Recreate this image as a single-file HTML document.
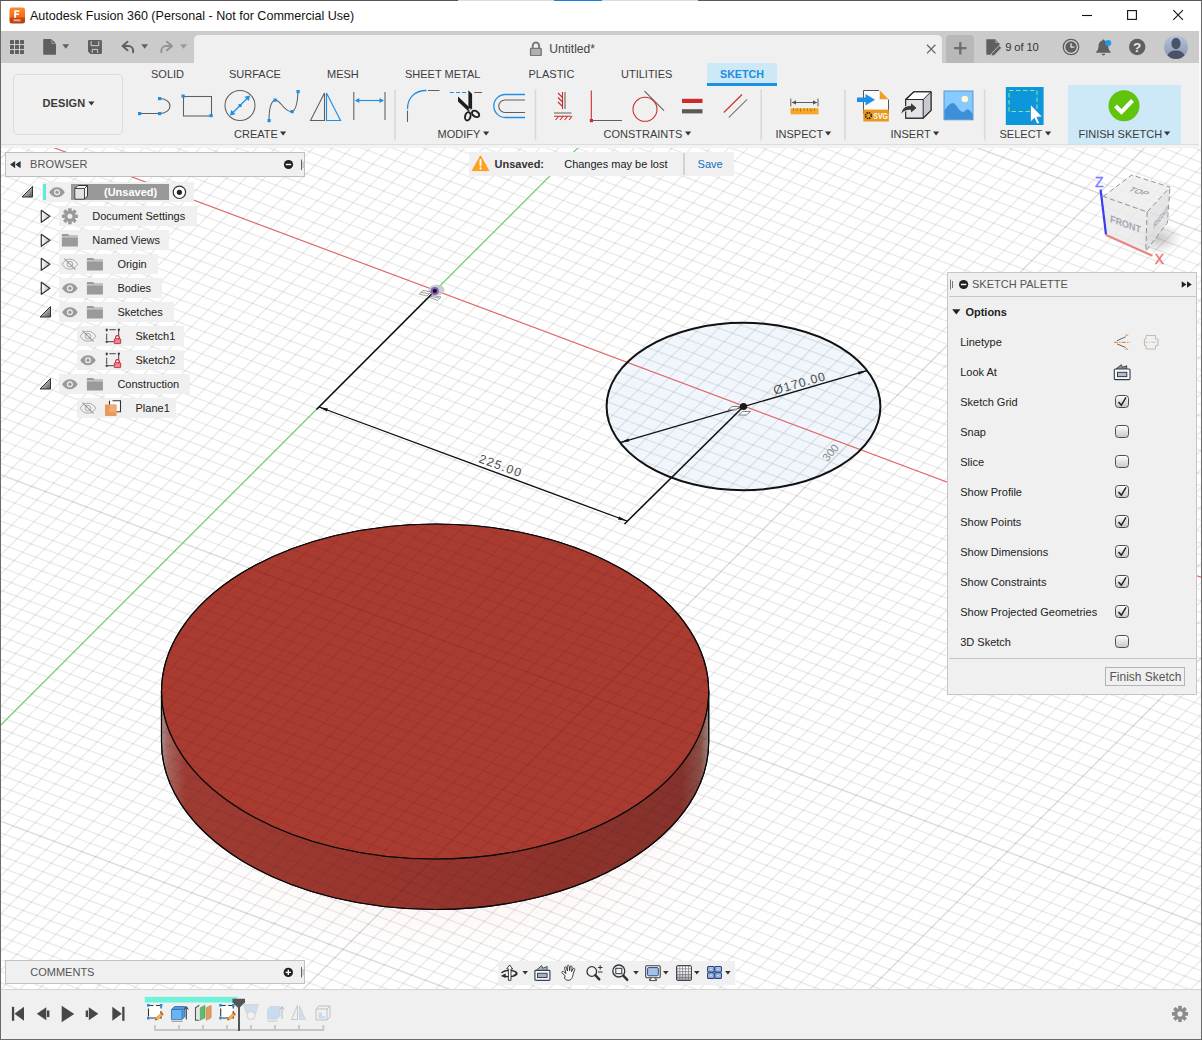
<!DOCTYPE html>
<html><head><meta charset="utf-8"><title>Autodesk Fusion 360</title>
<style>
*{box-sizing:border-box;margin:0;padding:0}
html,body{width:1202px;height:1040px;overflow:hidden;background:#fff}
body{font-family:"Liberation Sans",sans-serif;font-size:12px;color:#333;position:relative}
.abs{position:absolute}
svg{position:absolute;overflow:visible}
.t{position:absolute;white-space:nowrap;line-height:1}
</style></head><body>
<!-- ===== VIEWPORT ===== -->
<svg class="abs" style="left:0;top:0" width="1202" height="1040" viewBox="0 0 1202 1040">
<defs>
<clipPath id="vp"><rect x="0" y="146" width="1202" height="844"/></clipPath>
<linearGradient id="side" x1="161" y1="0" x2="709" y2="0" gradientUnits="userSpaceOnUse">
<stop offset="0" stop-color="#a89088"/><stop offset="0.012" stop-color="#a4665e"/><stop offset="0.045" stop-color="#9e3c34"/>
<stop offset="0.4" stop-color="#98362e"/><stop offset="0.75" stop-color="#8c322b"/><stop offset="0.95" stop-color="#86322c"/><stop offset="0.985" stop-color="#8a5048"/><stop offset="1" stop-color="#9c8880"/>
</linearGradient>
<radialGradient id="shadow" cx="0.5" cy="0.5" r="0.5"><stop offset="0" stop-color="#f4d8d4" stop-opacity="0.4"/><stop offset="0.6" stop-color="#f8e4e0" stop-opacity="0.22"/><stop offset="1" stop-color="#fff" stop-opacity="0"/></radialGradient>
</defs>
<g clip-path="url(#vp)">
<rect x="0" y="146" width="1202" height="844" fill="#fff"/>
<!-- ground shadow -->
<ellipse cx="450" cy="820" rx="330" ry="170" fill="url(#shadow)"/>
<!-- disk -->
<path d="M161.5 691.5 L161.5 742 A273.6 167.5 0 0 0 708.7 742 L708.7 691.5 Z" fill="url(#side)" stroke="#0a0a0a" stroke-width="1.15"/>
<ellipse cx="435.1" cy="691.5" rx="273.6" ry="167.5" fill="#aa3b31" stroke="#0a0a0a" stroke-width="1.15"/>
<!-- sketch circle fill -->
<ellipse cx="743.5" cy="406.5" rx="136.9" ry="83.7" fill="#edf5fc" fill-opacity="0.85"/>
<!-- grid -->
<path d="M-1406.0 998.6L1204.6 1976.4M-1389.2 981.8L1221.4 1959.6M-1380.8 973.4L1229.8 1951.2M-1372.4 965.0L1238.2 1942.8M-1364.0 956.6L1246.6 1934.4M-1355.6 948.2L1255.0 1926.0M-1347.2 939.8L1263.4 1917.6M-1338.8 931.4L1271.8 1909.2M-1330.4 923.0L1280.2 1900.8M-1322.0 914.6L1288.6 1892.4M-1313.6 906.2L1297.0 1884.0M-1305.2 897.8L1305.4 1875.6M-1296.8 889.4L1313.8 1867.2M-1288.4 881.0L1322.2 1858.8M-1280.0 872.6L1330.6 1850.4M-1271.6 864.2L1339.0 1842.0M-1263.2 855.8L1347.4 1833.6M-1254.8 847.4L1355.8 1825.2M-1246.4 839.0L1364.2 1816.8M-1238.0 830.6L1372.6 1808.4M-1229.6 822.2L1381.0 1800.0M-1221.2 813.8L1389.4 1791.6M-1212.8 805.4L1397.8 1783.2M-1204.4 797.0L1406.2 1774.8M-1196.0 788.6L1414.6 1766.4M-1187.6 780.2L1423.0 1758.0M-1179.2 771.8L1431.4 1749.6M-1170.8 763.4L1439.8 1741.2M-1162.4 755.0L1448.2 1732.8M-1154.0 746.6L1456.6 1724.4M-1137.2 729.8L1473.4 1707.6M-1128.8 721.4L1481.8 1699.2M-1120.4 713.0L1490.2 1690.8M-1112.0 704.6L1498.6 1682.4M-1103.6 696.2L1507.0 1674.0M-1095.2 687.8L1515.4 1665.6M-1086.8 679.4L1523.8 1657.2M-1078.4 671.0L1532.2 1648.8M-1070.0 662.6L1540.6 1640.4M-1061.6 654.2L1549.0 1632.0M-1053.2 645.8L1557.4 1623.6M-1044.8 637.4L1565.8 1615.2M-1036.4 629.0L1574.2 1606.8M-1028.0 620.6L1582.6 1598.4M-1019.6 612.2L1591.0 1590.0M-1011.2 603.8L1599.4 1581.6M-1002.8 595.4L1607.8 1573.2M-994.4 587.0L1616.2 1564.8M-986.0 578.6L1624.6 1556.4M-977.6 570.2L1633.0 1548.0M-969.2 561.8L1641.4 1539.6M-960.8 553.4L1649.8 1531.2M-952.4 545.0L1658.2 1522.8M-944.0 536.6L1666.6 1514.4M-935.6 528.2L1675.0 1506.0M-927.2 519.8L1683.4 1497.6M-918.8 511.4L1691.8 1489.2M-910.4 503.0L1700.2 1480.8M-902.0 494.6L1708.6 1472.4M-885.2 477.8L1725.4 1455.6M-876.8 469.4L1733.8 1447.2M-868.4 461.0L1742.2 1438.8M-860.0 452.6L1750.6 1430.4M-851.6 444.2L1759.0 1422.0M-843.2 435.8L1767.4 1413.6M-834.8 427.4L1775.8 1405.2M-826.4 419.0L1784.2 1396.8M-818.0 410.6L1792.6 1388.4M-809.6 402.2L1801.0 1380.0M-801.2 393.8L1809.4 1371.6M-792.8 385.4L1817.8 1363.2M-784.4 377.0L1826.2 1354.8M-776.0 368.6L1834.6 1346.4M-767.6 360.2L1843.0 1338.0M-759.2 351.8L1851.4 1329.6M-750.8 343.4L1859.8 1321.2M-742.4 335.0L1868.2 1312.8M-734.0 326.6L1876.6 1304.4M-725.6 318.2L1885.0 1296.0M-717.2 309.8L1893.4 1287.6M-708.8 301.4L1901.8 1279.2M-700.4 293.0L1910.2 1270.8M-692.0 284.6L1918.6 1262.4M-683.6 276.2L1927.0 1254.0M-675.2 267.8L1935.4 1245.6M-666.8 259.4L1943.8 1237.2M-658.4 251.0L1952.2 1228.8M-650.0 242.6L1960.6 1220.4M-633.2 225.8L1977.4 1203.6M-624.8 217.4L1985.8 1195.2M-616.4 209.0L1994.2 1186.8M-608.0 200.6L2002.6 1178.4M-599.6 192.2L2011.0 1170.0M-591.2 183.8L2019.4 1161.6M-582.8 175.4L2027.8 1153.2M-574.4 167.0L2036.2 1144.8M-566.0 158.6L2044.6 1136.4M-557.6 150.2L2053.0 1128.0M-549.2 141.8L2061.4 1119.6M-540.8 133.4L2069.8 1111.2M-532.4 125.0L2078.2 1102.8M-524.0 116.6L2086.6 1094.4M-515.6 108.2L2095.0 1086.0M-507.2 99.8L2103.4 1077.6M-498.8 91.4L2111.8 1069.2M-490.4 83.0L2120.2 1060.8M-482.0 74.6L2128.6 1052.4M-473.6 66.2L2137.0 1044.0M-465.2 57.8L2145.4 1035.6M-456.8 49.4L2153.8 1027.2M-448.4 41.0L2162.2 1018.8M-440.0 32.6L2170.6 1010.4M-431.6 24.2L2179.0 1002.0M-423.2 15.8L2187.4 993.6M-414.8 7.4L2195.8 985.2M-406.4 -1.0L2204.2 976.8M-398.0 -9.4L2212.6 968.4M-381.2 -26.2L2229.4 951.6M-372.8 -34.6L2237.8 943.2M-364.4 -43.0L2246.2 934.8M-356.0 -51.4L2254.6 926.4M-347.6 -59.8L2263.0 918.0M-339.2 -68.2L2271.4 909.6M-330.8 -76.6L2279.8 901.2M-322.4 -85.0L2288.2 892.8M-314.0 -93.4L2296.6 884.4M-305.6 -101.8L2305.0 876.0M-297.2 -110.2L2313.4 867.6M-288.8 -118.6L2321.8 859.2M-280.4 -127.0L2330.2 850.8M-272.0 -135.4L2338.6 842.4M-263.6 -143.8L2347.0 834.0M-255.2 -152.2L2355.4 825.6M-246.8 -160.6L2363.8 817.2M-238.4 -169.0L2372.2 808.8M-230.0 -177.4L2380.6 800.4M-221.6 -185.8L2389.0 792.0M-213.2 -194.2L2397.4 783.6M-204.8 -202.6L2405.8 775.2M-196.4 -211.0L2414.2 766.8M-188.0 -219.4L2422.6 758.4M-179.6 -227.8L2431.0 750.0M-171.2 -236.2L2439.4 741.6M-162.8 -244.6L2447.8 733.2M-154.4 -253.0L2456.2 724.8M-146.0 -261.4L2464.6 716.4M-129.2 -278.2L2481.4 699.6M-120.8 -286.6L2489.8 691.2M-112.4 -295.0L2498.2 682.8M-104.0 -303.4L2506.6 674.4M-95.6 -311.8L2515.0 666.0M-87.2 -320.2L2523.4 657.6M-78.8 -328.6L2531.8 649.2M-70.4 -337.0L2540.2 640.8M-62.0 -345.4L2548.6 632.4M-53.6 -353.8L2557.0 624.0M-45.2 -362.2L2565.4 615.6M-36.8 -370.6L2573.8 607.2M-28.4 -379.0L2582.2 598.8M-20.0 -387.4L2590.6 590.4M-11.6 -395.8L2599.0 582.0M-3.2 -404.2L2607.4 573.6M5.2 -412.6L2615.8 565.2M13.6 -421.0L2624.2 556.8M22.0 -429.4L2632.6 548.4M30.4 -437.8L2641.0 540.0M38.8 -446.2L2649.4 531.6M47.2 -454.6L2657.8 523.2M55.6 -463.0L2666.2 514.8M64.0 -471.4L2674.6 506.4M72.4 -479.8L2683.0 498.0M80.8 -488.2L2691.4 489.6M89.2 -496.6L2699.8 481.2M97.6 -505.0L2708.2 472.8M106.0 -513.4L2716.6 464.4M122.8 -530.2L2733.4 447.6M131.2 -538.6L2741.8 439.2M139.6 -547.0L2750.2 430.8M148.0 -555.4L2758.6 422.4M156.4 -563.8L2767.0 414.0M164.8 -572.2L2775.4 405.6M173.2 -580.6L2783.8 397.2M181.6 -589.0L2792.2 388.8M190.0 -597.4L2800.6 380.4M198.4 -605.8L2809.0 372.0M206.8 -614.2L2817.4 363.6M215.2 -622.6L2825.8 355.2M223.6 -631.0L2834.2 346.8M232.0 -639.4L2842.6 338.4M240.4 -647.8L2851.0 330.0M248.8 -656.2L2859.4 321.6M257.2 -664.6L2867.8 313.2M265.6 -673.0L2876.2 304.8M274.0 -681.4L2884.6 296.4" stroke="#000" stroke-opacity="0.082" stroke-width="1.35" fill="none"/>
<path d="M-2010.0 1338.2L6.0 -677.8M-1996.2 1343.3L19.8 -672.7M-1982.5 1348.5L33.5 -667.5M-1968.7 1353.6L47.3 -662.4M-1955.0 1358.8L61.0 -657.2M-1941.3 1363.9L74.7 -652.1M-1927.5 1369.1L88.5 -646.9M-1913.8 1374.2L102.2 -641.8M-1900.0 1379.4L116.0 -636.6M-1886.3 1384.5L129.7 -631.5M-1872.6 1389.7L143.4 -626.3M-1858.8 1394.8L157.2 -621.2M-1845.1 1399.9L170.9 -616.1M-1831.3 1405.1L184.7 -610.9M-1803.9 1415.4L212.1 -600.6M-1790.1 1420.5L225.9 -595.5M-1776.4 1425.7L239.6 -590.3M-1762.6 1430.8L253.4 -585.2M-1748.9 1436.0L267.1 -580.0M-1735.2 1441.1L280.8 -574.9M-1721.4 1446.3L294.6 -569.7M-1707.7 1451.4L308.3 -564.6M-1693.9 1456.6L322.1 -559.4M-1680.2 1461.7L335.8 -554.3M-1666.5 1466.8L349.5 -549.2M-1652.7 1472.0L363.3 -544.0M-1639.0 1477.1L377.0 -538.9M-1625.2 1482.3L390.8 -533.7M-1611.5 1487.4L404.5 -528.6M-1597.8 1492.6L418.2 -523.4M-1584.0 1497.7L432.0 -518.3M-1570.3 1502.9L445.7 -513.1M-1556.5 1508.0L459.5 -508.0M-1542.8 1513.2L473.2 -502.8M-1529.1 1518.3L486.9 -497.7M-1515.3 1523.5L500.7 -492.5M-1501.6 1528.6L514.4 -487.4M-1487.8 1533.7L528.2 -482.3M-1474.1 1538.9L541.9 -477.1M-1460.4 1544.0L555.6 -472.0M-1446.6 1549.2L569.4 -466.8M-1432.9 1554.3L583.1 -461.7M-1419.1 1559.5L596.9 -456.5M-1391.7 1569.8L624.3 -446.2M-1377.9 1574.9L638.1 -441.1M-1364.2 1580.1L651.8 -435.9M-1350.4 1585.2L665.6 -430.8M-1336.7 1590.3L679.3 -425.6M-1323.0 1595.5L693.0 -420.5M-1309.2 1600.6L706.8 -415.4M-1295.5 1605.8L720.5 -410.2M-1281.7 1610.9L734.3 -405.1M-1268.0 1616.1L748.0 -399.9M-1254.3 1621.2L761.7 -394.8M-1240.5 1626.4L775.5 -389.6M-1226.8 1631.5L789.2 -384.5M-1213.0 1636.7L803.0 -379.3M-1199.3 1641.8L816.7 -374.2M-1185.6 1647.0L830.4 -369.0M-1171.8 1652.1L844.2 -363.9M-1158.1 1657.2L857.9 -358.8M-1144.3 1662.4L871.7 -353.6M-1130.6 1667.5L885.4 -348.5M-1116.9 1672.7L899.1 -343.3M-1103.1 1677.8L912.9 -338.2M-1089.4 1683.0L926.6 -333.0M-1075.6 1688.1L940.4 -327.9M-1061.9 1693.3L954.1 -322.7M-1048.2 1698.4L967.8 -317.6M-1034.4 1703.6L981.6 -312.4M-1020.7 1708.7L995.3 -307.3M-1006.9 1713.9L1009.1 -302.1M-979.5 1724.1L1036.5 -291.9M-965.7 1729.3L1050.3 -286.7M-952.0 1734.4L1064.0 -281.6M-938.2 1739.6L1077.8 -276.4M-924.5 1744.7L1091.5 -271.3M-910.8 1749.9L1105.2 -266.1M-897.0 1755.0L1119.0 -261.0M-883.3 1760.2L1132.7 -255.8M-869.5 1765.3L1146.5 -250.7M-855.8 1770.5L1160.2 -245.5M-842.1 1775.6L1173.9 -240.4M-828.3 1780.8L1187.7 -235.2M-814.6 1785.9L1201.4 -230.1M-800.8 1791.0L1215.2 -225.0M-787.1 1796.2L1228.9 -219.8M-773.4 1801.3L1242.6 -214.7M-759.6 1806.5L1256.4 -209.5M-745.9 1811.6L1270.1 -204.4M-732.1 1816.8L1283.9 -199.2M-718.4 1821.9L1297.6 -194.1M-704.7 1827.1L1311.3 -188.9M-690.9 1832.2L1325.1 -183.8M-677.2 1837.4L1338.8 -178.6M-663.4 1842.5L1352.6 -173.5M-649.7 1847.7L1366.3 -168.4M-636.0 1852.8L1380.0 -163.2M-622.2 1857.9L1393.8 -158.1M-608.5 1863.1L1407.5 -152.9M-594.7 1868.2L1421.3 -147.8M-567.3 1878.5L1448.7 -137.5M-553.5 1883.7L1462.5 -132.3M-539.8 1888.8L1476.2 -127.2M-526.0 1894.0L1490.0 -122.0M-512.3 1899.1L1503.7 -116.9M-498.6 1904.3L1517.4 -111.7M-484.8 1909.4L1531.2 -106.6M-471.1 1914.5L1544.9 -101.5M-457.3 1919.7L1558.7 -96.3M-443.6 1924.8L1572.4 -91.2M-429.9 1930.0L1586.1 -86.0M-416.1 1935.1L1599.9 -80.9M-402.4 1940.3L1613.6 -75.7M-388.6 1945.4L1627.4 -70.6M-374.9 1950.6L1641.1 -65.4M-361.2 1955.7L1654.8 -60.3M-347.4 1960.9L1668.6 -55.1M-333.7 1966.0L1682.3 -50.0M-319.9 1971.2L1696.1 -44.8M-306.2 1976.3L1709.8 -39.7M-292.5 1981.4L1723.5 -34.6M-278.7 1986.6L1737.3 -29.4M-265.0 1991.7L1751.0 -24.3M-251.2 1996.9L1764.8 -19.1M-237.5 2002.0L1778.5 -14.0M-223.8 2007.2L1792.2 -8.8M-210.0 2012.3L1806.0 -3.7M-196.3 2017.5L1819.7 1.5M-182.5 2022.6L1833.5 6.6M-155.1 2032.9L1860.9 16.9M-141.3 2038.1L1874.7 22.1M-127.6 2043.2L1888.4 27.2M-113.8 2048.3L1902.2 32.3M-100.1 2053.5L1915.9 37.5M-86.4 2058.6L1929.6 42.6M-72.6 2063.8L1943.4 47.8M-58.9 2068.9L1957.1 52.9M-45.1 2074.1L1970.9 58.1M-31.4 2079.2L1984.6 63.2M-17.7 2084.4L1998.3 68.4M-3.9 2089.5L2012.1 73.5M9.8 2094.7L2025.8 78.7M23.6 2099.8L2039.6 83.8M37.3 2104.9L2053.3 88.9M51.0 2110.1L2067.0 94.1M64.8 2115.2L2080.8 99.2M78.5 2120.4L2094.5 104.4M92.3 2125.5L2108.3 109.5M106.0 2130.7L2122.0 114.7M119.7 2135.8L2135.7 119.8M133.5 2141.0L2149.5 125.0M147.2 2146.1L2163.2 130.1M161.0 2151.3L2177.0 135.3M174.7 2156.4L2190.7 140.4M188.4 2161.6L2204.4 145.6M202.2 2166.7L2218.2 150.7M215.9 2171.8L2231.9 155.8M229.7 2177.0L2245.7 161.0M257.1 2187.3L2273.1 171.3M270.9 2192.4L2286.9 176.4M284.6 2197.6L2300.6 181.6M298.4 2202.7L2314.4 186.7M312.1 2207.9L2328.1 191.9M325.8 2213.0L2341.8 197.0M339.6 2218.2L2355.6 202.2M353.3 2223.3L2369.3 207.3M367.1 2228.5L2383.1 212.5M380.8 2233.6L2396.8 217.6M394.5 2238.7L2410.5 222.7M408.3 2243.9L2424.3 227.9M422.0 2249.0L2438.0 233.0M435.8 2254.2L2451.8 238.2M449.5 2259.3L2465.5 243.3M463.2 2264.5L2479.2 248.5M477.0 2269.6L2493.0 253.6M490.7 2274.8L2506.7 258.8M504.5 2279.9L2520.5 263.9M518.2 2285.1L2534.2 269.1M531.9 2290.2L2547.9 274.2M545.7 2295.4L2561.7 279.4M559.4 2300.5L2575.4 284.5M573.2 2305.6L2589.2 289.6M586.9 2310.8L2602.9 294.8M600.6 2315.9L2616.6 299.9M614.4 2321.1L2630.4 305.1M628.1 2326.2L2644.1 310.2M641.9 2331.4L2657.9 315.4M669.3 2341.7L2685.3 325.7M683.1 2346.8L2699.1 330.8M696.8 2352.0L2712.8 336.0M710.6 2357.1L2726.6 341.1M724.3 2362.2L2740.3 346.2M738.0 2367.4L2754.0 351.4M751.8 2372.5L2767.8 356.5M765.5 2377.7L2781.5 361.7M779.3 2382.8L2795.3 366.8M793.0 2388.0L2809.0 372.0M806.7 2393.1L2822.7 377.1M820.5 2398.3L2836.5 382.3M834.2 2403.4L2850.2 387.4M848.0 2408.6L2864.0 392.6M861.7 2413.7L2877.7 397.7M875.4 2418.9L2891.4 402.9M889.2 2424.0L2905.2 408.0M902.9 2429.1L2918.9 413.1M916.7 2434.3L2932.7 418.3M930.4 2439.4L2946.4 423.4M944.1 2444.6L2960.1 428.6M957.9 2449.7L2973.9 433.7M971.6 2454.9L2987.6 438.9M985.4 2460.0L3001.4 444.0M999.1 2465.2L3015.1 449.2M1012.8 2470.3L3028.8 454.3M1026.6 2475.5L3042.6 459.5M1040.3 2480.6L3056.3 464.6M1054.1 2485.8L3070.1 469.8M1081.5 2496.0L3097.5 480.0M1095.3 2501.2L3111.3 485.2M1109.0 2506.3L3125.0 490.3M1122.8 2511.5L3138.8 495.5M1136.5 2516.6L3152.5 500.6M1150.2 2521.8L3166.2 505.8M1164.0 2526.9L3180.0 510.9M1177.7 2532.1L3193.7 516.1M1191.5 2537.2L3207.5 521.2" stroke="#000" stroke-opacity="0.082" stroke-width="1.35" fill="none"/>
<path d="M-1397.6 990.2L1213.0 1968.0M-1145.6 738.2L1465.0 1716.0M-893.6 486.2L1717.0 1464.0M-641.6 234.2L1969.0 1212.0M-137.6 -269.8L2473.0 708.0M114.4 -521.8L2725.0 456.0" stroke="#000" stroke-opacity="0.14" stroke-width="1.4" fill="none"/>
<path d="M-1817.6 1410.2L198.4 -605.8M-1405.4 1564.6L610.6 -451.4M-581.0 1873.4L1435.0 -142.6M-168.8 2027.8L1847.2 11.8M243.4 2182.1L2259.4 166.1M655.6 2336.5L2671.6 320.5M1067.8 2490.9L3083.8 474.9" stroke="#000" stroke-opacity="0.14" stroke-width="1.4" fill="none"/>
<!-- fade grid over the body -->
<path d="M161.5 691.5 L161.5 742 A273.6 167.5 0 0 0 708.7 742 L708.7 691.5 A273.6 167.5 0 0 1 161.5 691.5 Z" fill="url(#side)" fill-opacity="0.3"/>
<ellipse cx="435.1" cy="691.5" rx="273.6" ry="167.5" fill="#aa3b31" fill-opacity="0.3" stroke="#0a0a0a" stroke-width="1.15"/>
<path d="M161.5 691.5 L161.5 742 A273.6 167.5 0 0 0 708.7 742 L708.7 691.5" fill="none" stroke="#0a0a0a" stroke-width="1.15"/>
<!-- axes -->
<line x1="0" y1="127.5" x2="1202" y2="577.6" stroke="#df6565" stroke-width="1.15"/>
<line x1="-10" y1="735.8" x2="600" y2="125.8" stroke="#5fd35f" stroke-width="1.2"/>
<!-- sketch circle outline -->
<ellipse cx="743.5" cy="406.5" rx="136.9" ry="83.7" fill="none" stroke="#111" stroke-width="2"/>
<!-- dimension 225 -->
<g stroke="#111" stroke-width="1.3" fill="none">
<line x1="434.8" y1="291" x2="316.5" y2="409.5" stroke-width="1.6"/>
<line x1="743.5" y1="406.5" x2="624.5" y2="524" stroke-width="1.6"/>
<line x1="319" y1="407" x2="627" y2="521"/>
</g>
<path d="M319 407L326.900 411.600L328 408.600zM627 521L618 519.400L619.100 516.400z" fill="#111"/>
<!-- diameter dim -->
<line x1="620.2" y1="442.6" x2="866.8" y2="370.7" stroke="#111" stroke-width="1.25"/>
<path d="M620.200 442.600L629.300 441.600L628.400 438.600zM866.800 370.700L858.600 374.700L857.700 371.700z" fill="#111"/>
<text transform="translate(800.8 387.2) rotate(-16)" font-family="Liberation Sans, sans-serif" font-size="12.3" letter-spacing="1" text-anchor="middle" fill="#333" opacity=".87">Ø170.00</text>
<text transform="translate(499.3 469.8) rotate(20.3)" font-family="Liberation Sans, sans-serif" font-size="12.3" letter-spacing="1.3" text-anchor="middle" fill="#333" opacity=".87">225.00</text>
<text transform="translate(833.5 455) rotate(-50)" font-family="Liberation Sans, sans-serif" font-size="11" text-anchor="middle" fill="#888">300</text>
<!-- origin marker -->
<ellipse cx="436.5" cy="290" rx="8" ry="5.600" fill="#c6c6c6" fill-opacity="0.85"/>
<g stroke="#777" stroke-width="0.700" fill="#fff" fill-opacity="0.85">
<path d="M419.200 294l3.800-3.500l8 1.500l-4 4zM429.500 297.500l3.500-2l8 1.500l-3.500 3.500z"/>
<path d="M421 292.300l8 1.600M431.200 296.500l8 1.600" fill="none"/>
</g>
<circle cx="434.800" cy="291" r="3.100" fill="#1a1a1a" stroke="#8b5fc7" stroke-width="1.900"/>
<!-- centre marker -->
<g stroke="#666" stroke-width="0.8" fill="#fff" fill-opacity="0.7">
<path d="M728 410l4-3.5h8l-4 3.5zM738.5 415l4-3.5h8l-4 3.5z"/>
</g>
<circle cx="743.5" cy="406.5" r="3.6" fill="#1a1a1a"/>
</g>
</svg>
<!-- ===== TITLE BAR ===== -->
<div class="abs" style="left:0;top:0;width:1202px;height:31px;background:#fff"></div>
<svg style="left:9px;top:7px" width="17" height="17" viewBox="0 0 17 17">
<defs><linearGradient id="fl" x1="0" y1="0" x2="0" y2="1"><stop offset="0" stop-color="#ff8a2a"/><stop offset="0.62" stop-color="#f26a16"/><stop offset="0.63" stop-color="#c9480e"/><stop offset="1" stop-color="#b8400c"/></linearGradient></defs>
<rect x="0.5" y="0.5" width="15.5" height="16" rx="2.5" fill="url(#fl)"/>
<path d="M5.2 3.2h5.2v1.7H7.1v1.6h2.9v1.6H7.1v2.6H5.2z" fill="#fff"/>
<rect x="4.5" y="12.3" width="7" height="2" fill="#fff" fill-opacity="0.55"/>
</svg>
<div class="t" style="left:30px;top:9.500px;font-size:12.55px;color:#111">Autodesk Fusion 360 (Personal - Not for Commercial Use)</div>
<svg style="left:1078px;top:5px" width="112" height="22" viewBox="0 0 112 22">
<path d="M4 10.5h10" stroke="#111" stroke-width="1.1"/>
<rect x="49.6" y="5.6" width="8.8" height="8.8" fill="none" stroke="#111" stroke-width="1.1"/>
<path d="M95.300 5.200l9.600 9.700M104.900 5.200l-9.600 9.700" stroke="#111" stroke-width="1.1"/>
</svg>
<!-- ===== TAB BAR ===== -->
<div class="abs" style="left:0;top:31px;width:1199px;height:32px;background:#cbcbcb"></div>
<div class="abs" style="left:194px;top:35px;width:748px;height:29px;background:#f0f0f0;border-radius:5px 5px 0 0"></div>
<div class="abs" style="left:946px;top:35px;width:27.5px;height:27.5px;background:#b8b8b8;border-radius:4px 4px 0 0"></div>
<svg style="left:0;top:31px" width="1202" height="32" viewBox="0 31 1202 32">
<g fill="#5f5f5f">
<!-- grid icon -->
<g>
<rect x="10" y="40" width="4" height="4" rx=".6"/><rect x="15" y="40" width="4" height="4" rx=".6"/><rect x="20" y="40" width="4" height="4" rx=".6"/>
<rect x="10" y="45" width="4" height="4" rx=".6"/><rect x="15" y="45" width="4" height="4" rx=".6"/><rect x="20" y="45" width="4" height="4" rx=".6"/>
<rect x="10" y="50" width="4" height="4" rx=".6"/><rect x="15" y="50" width="4" height="4" rx=".6"/><rect x="20" y="50" width="4" height="4" rx=".6"/>
</g>
<!-- file icon -->
<path d="M44 39h7.2l4.8 4.8V54a.8.8 0 0 1-.8.8H44a.8.8 0 0 1-.8-.8V39.8a.8.8 0 0 1 .8-.8z"/>
<path d="M51.6 39l4.4 4.4h-4.4z" fill="#cbcbcb"/>
<path d="M52.2 39.8v3.1h3.1z" fill="#5f5f5f"/>
<path d="M62.4 44.3h6.8l-3.4 4.4z"/>
<!-- save icon -->
<path d="M89.200 39.900h11.500a1.200 1.200 0 0 1 1.200 1.200v11.700a1.200 1.200 0 0 1-1.200 1.200h-10.200l-2.500-2.500v-10.400a1.200 1.200 0 0 1 1.200-1.200z"/>
<path d="M91.100 41.100v4.600h7.700v-4.600" fill="none" stroke="#d0d0d0" stroke-width="1"/>
<path d="M92.300 52.900v-3.500h5.300v3.500" fill="none" stroke="#d0d0d0" stroke-width="1"/>
<!-- undo -->
<path d="M141.300 44.300h6.800l-3.400 4.400z"/>
<path d="M180.200 44.300h6.800l-3.400 4.400z" fill="#9a9a9a"/>
</g>
<path d="M127.500 41.700l-5 4.300l5 4.300M122.800 46h5.700a4.600 4.600 0 0 1 4.600 4.600v1.600" fill="none" stroke="#5f5f5f" stroke-width="1.9" stroke-linecap="round" stroke-linejoin="round"/>
<path d="M167 41.700l5 4.300l-5 4.300M171.700 46h-5.700a4.600 4.600 0 0 0-4.600 4.600v1.600" fill="none" stroke="#929292" stroke-width="1.9" stroke-linecap="round" stroke-linejoin="round"/>
<!-- lock icon -->
<g>
<path d="M532.700 48v-2.300a3.200 3.200 0 0 1 6.400 0v2.300" fill="none" stroke="#777" stroke-width="1.900"/>
<rect x="529.900" y="47.700" width="12" height="8.200" rx="1" fill="#777"/>
<path d="M531.300 50h9.200M531.300 52h9.200M531.300 54h9.200" stroke="#eaeaea" stroke-width="1"/>
</g>
<!-- tab close -->
<path d="M927 44.800l8.400 8.600M935.400 44.800l-8.400 8.600" stroke="#666" stroke-width="1.3"/>
<!-- plus -->
<path d="M960.300 42v12.400M954.100 48.200h12.400" stroke="#6e6e6e" stroke-width="2.3"/>
<!-- job status icon -->
<path d="M986.300 39.200h9l4 4v5l-5.500 6.500h-7.500z" fill="#5f5f5f"/>
<path d="M995.600 39.200l3.700 3.700h-3.700z" fill="#cbcbcb"/><path d="M996.200 40.600v2h2z" fill="#5f5f5f"/>
<path d="M991.800 53.200l7.400-7.600l2.400 2.300l-7.400 7.600l-3.200 .800z" fill="#5f5f5f" stroke="#cbcbcb" stroke-width="0.900"/>
<!-- clock -->
<circle cx="1071" cy="47" r="7.700" fill="#d4d4d4" stroke="#5f5f5f" stroke-width="1.300"/>
<circle cx="1071" cy="47" r="5.700" fill="#5f5f5f"/>
<path d="M1071 43.200v4h3.400" fill="none" stroke="#e4e4e4" stroke-width="1.300"/>
<!-- bell -->
<path d="M1103.400 39.500a1.300 1.300 0 0 1 1.300 1.300c2.600 .8 3.600 3 3.600 5.400c0 2.800 .8 4.200 2.400 5.800v.8h-14.600v-.8c1.600-1.600 2.400-3 2.400-5.800c0-2.400 1-4.600 3.600-5.400a1.300 1.300 0 0 1 1.300-1.300z" fill="#5f5f5f"/>
<path d="M1101.600 53.800h3.600a1.800 1.800 0 0 1-3.600 0z" fill="#5f5f5f"/>
<circle cx="1108.200" cy="43" r="3.100" fill="#1e9be9"/>
<!-- help -->
<circle cx="1137.200" cy="47" r="8.200" fill="#5f5f5f"/>
<text x="1137.200" y="52" font-family="Liberation Sans, sans-serif" font-weight="bold" font-size="13.500" fill="#e8e8e8" text-anchor="middle">?</text>
<!-- avatar -->
<defs><linearGradient id="av" x1="0" y1="0" x2="0" y2="1"><stop offset="0" stop-color="#b8c4dc"/><stop offset="1" stop-color="#8894b0"/></linearGradient><clipPath id="avc"><circle cx="1176" cy="47" r="12"/></clipPath></defs>
<circle cx="1176" cy="47" r="12" fill="url(#av)"/>
<g clip-path="url(#avc)" fill="#4a5468"><ellipse cx="1176" cy="43.500" rx="4.600" ry="5.800"/><path d="M1166.500 60c0-6 3.500-8.500 7-9.500h5c3.500 1 7 3.500 7 9.500z"/></g>
</svg>
<div class="t" style="left:549.300px;top:43px;font-size:12.100px;color:#444">Untitled*</div>
<div class="t" style="left:1005.200px;top:41.500px;font-size:11.200px;color:#333;letter-spacing:-0.1px">9 of 10</div>
<!-- ===== RIBBON ===== -->
<div class="abs" style="left:0;top:63px;width:1202px;height:82px;background:#f0f0f0"></div>
<div class="abs" style="left:0;top:144px;width:1202px;height:1px;background:#dcdcdc"></div><div class="abs" style="left:0;top:145px;width:1202px;height:3px;background:#f3f3f3"></div>
<div class="abs" style="left:707px;top:63px;width:70px;height:23px;background:#cde8f6;border-bottom:3px solid #1e90e0"></div>
<div class="abs" style="left:1068px;top:85px;width:113px;height:59px;background:#cde8f6"></div>
<div class="abs" style="left:12.500px;top:73.500px;width:110px;height:61px;border:1.500px solid #dcdcdc;border-radius:5px;background:#f1f1f1"></div>
<div class="t" style="left:42.500px;top:98px;font-size:11px;font-weight:bold;color:#3a3a3a;letter-spacing:.1px">DESIGN</div>
<style>.rt{position:absolute;top:69px;font-size:11px;color:#3c3c3c;white-space:nowrap;line-height:1}.rl{position:absolute;top:129px;font-size:11px;color:#3c3c3c;white-space:nowrap;line-height:1}</style>
<div class="rt" style="left:151px">SOLID</div>
<div class="rt" style="left:229px">SURFACE</div>
<div class="rt" style="left:327px">MESH</div>
<div class="rt" style="left:405px">SHEET METAL</div>
<div class="rt" style="left:528.500px">PLASTIC</div>
<div class="rt" style="left:621px">UTILITIES</div>
<div class="rt" style="left:720px;color:#1a8ee0;font-weight:bold;font-size:10.700px;top:69px">SKETCH</div>
<div class="rl" style="left:234px">CREATE</div>
<div class="rl" style="left:437.500px">MODIFY</div>
<div class="rl" style="left:603.500px">CONSTRAINTS</div>
<div class="rl" style="left:775.500px">INSPECT</div>
<div class="rl" style="left:890.500px">INSERT</div>
<div class="rl" style="left:999.500px">SELECT</div>
<div class="rl" style="left:1078.500px">FINISH SKETCH</div>
<svg style="left:0;top:63px" width="1202" height="83" viewBox="0 63 1202 83">
<!-- dropdown arrows -->
<g fill="#333">
<path d="M88.300 101.500h6.200l-3.100 4z"/>
<path d="M280 131.500h6.200l-3.100 4z"/><path d="M483 131.500h6.200l-3.100 4z"/><path d="M685 131.500h6.200l-3.100 4z"/>
<path d="M825 131.500h6.200l-3.100 4z"/><path d="M933 131.500h6.200l-3.100 4z"/><path d="M1045 131.500h6.200l-3.100 4z"/><path d="M1164 131.500h6.200l-3.100 4z"/>
</g>
<!-- separators -->
<g stroke="#d9d9d9" stroke-width="1.600"><path d="M395 89.500v51M535.500 89.500v51M761.200 89.500v51M845 89.500v51M984.700 89.500v51"/></g>
<g fill="none" stroke="#5e5e5e" stroke-width="1.050">
<!-- line -->
<path d="M139.500 113.500h20a10.500 7.500 0 0 0 0-15"/>
<!-- rect -->
<rect x="183.500" y="96.500" width="28" height="19.500"/>
<!-- circle -->
<circle cx="240" cy="105.500" r="15"/>
<!-- spline -->
<path d="M269 120.500c0-12 2-19 6-20.500c5-1.500 9 13 17 11.500c4-1 5.500-9 6-20"/>
<!-- mirror -->
<path d="M324.500 93v27.500h-14z"/>
<!-- dim -->
<path d="M353.800 92v28M385 92v28"/>
<!-- fillet -->
<path d="M428 90.500h11.500M407.500 110.500v11.500"/>
<!-- trim -->
<path d="M474.200 92.500h7.800"/>
<!-- offset -->
<path d="M525 100h-20a6.200 6.200 0 0 0 0 12.500h20"/>
<!-- fix -->
<path d="M565 92v17M554 113h17.500"/>
<!-- horiz -->
<path d="M593 120.500h29"/>
<!-- tangent -->
<path d="M644.500 91.200l19.500 19.500"/>
<!-- parallel -->
<path d="M728.800 117.500l18.200-18"/>
<!-- measure -->
<path d="M790.800 98.500v8M818 98.500v8M792 102.500h25" stroke-width="1"/>
</g>
<path d="M792 102.500l4-2.200v4.400zM817 102.500l-4-2.200v4.400z" fill="#555"/>
<g fill="none" stroke="#1e8fe6" stroke-width="1.150">
<path d="M231.500 114l17-17"/>
<path d="M326.500 93v27.500h14z"/>
<path d="M356 100.500h27"/>
<path d="M407.500 109c0-11 7-18.500 19-18.500" stroke-width="1.300"/>
<path d="M449.800 92.500h17" stroke-dasharray="4 2.200"/>
<path d="M525 94.500h-19.700a11.500 11.500 0 0 0 0 23h19.700" stroke-width="1.300"/>
</g>
<g fill="#1e8fe6">
<rect x="138" y="112" width="3.200" height="3.200"/><rect x="158" y="112" width="3.200" height="3.200"/><rect x="158" y="97" width="3.200" height="3.200"/>
<rect x="181.500" y="94.500" width="3.200" height="3.200"/><rect x="209.500" y="114" width="3.200" height="3.200"/>
<rect x="238.600" y="104" width="3" height="3"/>
<path d="M230 115.500l1.200-5.500l4.300 4.300zM250 95.500l-1.200 5.500l-4.300-4.300z"/>
<rect x="267.500" y="119" width="3.200" height="3.200"/><rect x="273.500" y="98.500" width="3.200" height="3.200"/><rect x="290.500" y="110" width="3.200" height="3.200"/><rect x="296.500" y="90" width="3.200" height="3.200"/>
<path d="M354.800 100.500l4.500-2.500v5zM384 100.500l-4.500-2.500v5z"/>
</g>
<!-- scissors -->
<g>
<path d="M458 96.600v5l10.600 10l2.800-2.400z" fill="#1e1e1e"/>
<path d="M468.400 90.300l3.700 3.700v15.200l-3.700-1.800z" fill="#1e1e1e"/>
<ellipse cx="467.800" cy="116.300" rx="2.700" ry="4.200" fill="none" stroke="#1e1e1e" stroke-width="1.900" transform="rotate(14 467.800 116.300)"/>
<ellipse cx="475.600" cy="113.900" rx="2.700" ry="4" fill="none" stroke="#1e1e1e" stroke-width="1.900" transform="rotate(-55 475.600 113.900)"/>
<circle cx="469.600" cy="109.500" r="1" fill="#eee"/>
</g>
<!-- red constraint parts -->
<g fill="none" stroke="#cc2b2b" stroke-width="1.080">
<path d="M562.500 92v17" />
<path d="M558 93l4.500 4.500M558 97.500l4.500 4.500M558 102l4.500 4.500" />
<path d="M554 116.300h17.500M558.500 116.500l-3 3.500M563 116.500l-3 3.500M567.500 116.500l-3 3.500M572 116.500l-3 3.500"/>
<path d="M591.300 90.500v29.500"/>
<circle cx="645" cy="109.300" r="12"/>
<path d="M723.800 112.500l18.200-18"/>
</g>
<rect x="589.800" y="119" width="3.200" height="3.200" fill="#cc2b2b"/>
<rect x="682" y="98.800" width="20.500" height="4.200" fill="#cc2b2b"/>
<rect x="682" y="109.200" width="20.500" height="4.200" fill="#5a5a5a"/>
<!-- ruler -->
<rect x="790.500" y="108.300" width="28" height="6" fill="#f5a623"/>
<path d="M793.500 108.300v2.500M797 108.300v2.500M800.500 108.300v3.300M804 108.300v2.500M807.500 108.300v2.500M811 108.300v3.300M814.500 108.300v2.500" stroke="#9a6200" stroke-width=".7"/>
<!-- insert svg -->
<g>
<path d="M863.500 90.500h15.500v9h9.500v15h-25z" fill="#fbfbfb"/>
<path d="M863.500 114v-23.500h15.500M888.500 99.500v14" fill="none" stroke="#555" stroke-width="1"/>
<path d="M879.800 90.500l8.700 8.700h-8.700z" fill="#f0a020"/>
<path d="M857 97.600h8.500v-3.600l9.500 5.800l-9.500 5.800v-3.600h-8.500z" fill="#1e8fe6"/>
<rect x="863.300" y="109.600" width="25.500" height="11.900" fill="#e8981c"/>
<text x="880.600" y="119.300" font-family="Liberation Sans, sans-serif" font-weight="bold" font-size="8.600" fill="#fff" text-anchor="middle" textLength="14.500" lengthAdjust="spacingAndGlyphs">SVG</text>
<circle cx="868.400" cy="115.600" r="2.900" fill="none" stroke="#1a1a1a" stroke-width="1.500" stroke-dasharray="1.400 .880"/>
</g>
<!-- insert derive -->
<g>
<path d="M905.700 99.500l8-7.700h17.300v18.600l-7.800 7.700h-17.500z" fill="#fdfdfd" stroke="#2a2a2a" stroke-width="1.100" stroke-linejoin="round"/>
<path d="M923.200 99.500l7.800-7.700v18.600l-7.800 7.700z" fill="#c9c9d1"/>
<path d="M905.700 99.500h17.500v18.600h-17.500z" fill="#e3e4e8"/>
<path d="M905.700 99.500h17.500v18.600M923.200 99.500l7.800-7.700" fill="none" stroke="#2a2a2a" stroke-width="1"/>
<path d="M905.700 99.500l8-7.700h17.300v18.600l-7.800 7.700h-17.500z" fill="none" stroke="#2a2a2a" stroke-width="1.100" stroke-linejoin="round"/>
<path d="M900.700 114.800c.8-6.200 4-9.300 9.800-9.300v-3.300l6.600 5.700l-6.600 5.700v-3.400c-4.600 0-7.400 1.200-9.800 4.600z" fill="#3a3a3c" stroke="#f4f4f4" stroke-width=".900" stroke-linejoin="round"/>
</g>
<!-- image -->
<g>
<rect x="944" y="91" width="29" height="28.800" fill="#86caff" stroke="#4a90d0" stroke-width=".900"/>
<path d="M944.500 110.500c3.200-4.800 6-7.500 8.500-7.500c3 0 6 9 10 9c2 0 3-2.700 4.600-2.700c1.800 0 3.400 2.200 5 4.700v5.300h-28.100z" fill="#3d8fd6"/>
<circle cx="964.800" cy="99" r="3.300" fill="#fffad2"/>
</g>
<!-- select -->
<g>
<rect x="1005.800" y="87" width="37.800" height="38" fill="#0c96dc"/>
<rect x="1009" y="90.500" width="28" height="21" fill="none" stroke="#8ce68c" stroke-width="1.050" stroke-dasharray="4.500 2.500"/>
<path d="M1030.500 104.600v17.300l3.900-3.700l2.600 5.900l2.600-1.200l-2.700-5.700l5.500-.3z" fill="#fff" stroke="#0a78c0" stroke-width=".600"/>
</g>
<!-- finish sketch -->
<circle cx="1124" cy="105.800" r="15.500" fill="#60c40c"/>
<path d="M1115.500 106l6 6l11-11.500" fill="none" stroke="#fff" stroke-width="4"/>
</svg>
<!-- ===== BROWSER ===== -->
<div class="abs" style="left:5px;top:152px;width:299.500px;height:24.500px;background:#f0f0f0;border:1px solid #bfbfbf"></div>
<div class="t" style="left:30px;top:159px;font-size:11px;color:#555;letter-spacing:.1px">BROWSER</div>
<style>.bg{position:absolute;background:#efefef;opacity:.95;height:19.800px}.bt{position:absolute;font-size:11px;color:#222;white-space:nowrap;line-height:1}</style>
<div class="bg" style="left:41.500px;top:182px;width:152.500px"></div>
<div class="bg" style="left:59px;top:206.200px;width:137.500px"></div>
<div class="bg" style="left:59px;top:230.200px;width:110px"></div>
<div class="bg" style="left:59px;top:254.200px;width:98.700px"></div>
<div class="bg" style="left:59px;top:278.200px;width:102.700px"></div>
<div class="bg" style="left:59px;top:302.200px;width:114.700px"></div>
<div class="bg" style="left:77.200px;top:326.200px;width:107.200px"></div>
<div class="bg" style="left:77.200px;top:350.200px;width:107.200px"></div>
<div class="bg" style="left:59px;top:374.200px;width:130.500px"></div>
<div class="bg" style="left:77.200px;top:398.200px;width:98.400px"></div>
<div class="abs" style="left:43px;top:183.800px;width:3px;height:16.200px;background:#62ead2"></div>
<div class="abs" style="left:71px;top:184.300px;width:98px;height:15.400px;background:#999"></div>
<div class="bt" style="left:104px;top:186.600px;color:#fff;font-weight:bold">(Unsaved)</div>
<div class="bt" style="left:92.300px;top:210.700px">Document Settings</div>
<div class="bt" style="left:92.300px;top:234.700px">Named Views</div>
<div class="bt" style="left:117.400px;top:258.700px">Origin</div>
<div class="bt" style="left:117.400px;top:282.700px">Bodies</div>
<div class="bt" style="left:117.400px;top:306.700px">Sketches</div>
<div class="bt" style="left:135.500px;top:330.700px">Sketch1</div>
<div class="bt" style="left:135.500px;top:354.700px">Sketch2</div>
<div class="bt" style="left:117.400px;top:378.700px">Construction</div>
<div class="bt" style="left:135.500px;top:402.700px">Plane1</div>
<svg style="left:0;top:150px" width="320" height="270" viewBox="0 150 320 270">
<defs>
<linearGradient id="tg" x1="0" y1="0" x2="1" y2="1"><stop offset="0" stop-color="#fff"/><stop offset="1" stop-color="#555"/></linearGradient>
<linearGradient id="tg2" x1="0" y1="0" x2="1" y2="0"><stop offset="0" stop-color="#fff"/><stop offset="1" stop-color="#bbb"/></linearGradient>
<g id="eye"><path d="M-7.800 0c2-3.400 4.800-5 7.800-5s5.800 1.600 7.800 5c-2 3.400-4.800 5-7.800 5s-5.800-1.600-7.800-5z" fill="#9a9a9a"/><circle r="3" fill="#f0f0f0"/><circle r="1.700" fill="#9a9a9a"/></g>
<g id="eyeoff"><path d="M-7.800 0c2-3.400 4.800-5 7.800-5s5.800 1.600 7.800 5c-2 3.400-4.800 5-7.800 5s-5.800-1.600-7.800-5z" fill="none" stroke="#aaa" stroke-width="1"/><circle r="2.800" fill="none" stroke="#aaa" stroke-width="1"/><path d="M-5.500-5.500l11 11" stroke="#999" stroke-width="1.100"/></g>
<g id="fold"><path d="M-8-6.200h6.200l1.300 1.600h8.500v11h-16z" fill="#9a9a9a"/><path d="M-8-3.300h16" stroke="#efefef" stroke-width=".8"/></g>
<g id="tri"><path d="M-4.200-6l8.600 6l-8.600 6z" fill="url(#tg2)" stroke="#333" stroke-width="1.200" stroke-linejoin="round"/></g>
<g id="trix"><path d="M5 5h-10.500l10.500-10.500z" fill="url(#tg)" stroke="#333" stroke-width="1" stroke-linejoin="round"/></g>
<g id="sk"><rect x="-6.300" y="-6.300" width="12" height="12" fill="none" stroke="#444" stroke-width="1" stroke-dasharray="6.500 2.200" stroke-dashoffset="-2.700"/><rect x="-7.300" y="-7.300" width="2" height="2" fill="#333"/><rect x="4.800" y="-7.300" width="2" height="2" fill="#333"/><rect x="-7.300" y="4.800" width="2" height="2" fill="#333"/><path d="M2.600 2.800v-1.300a1.900 1.900 0 0 1 3.800 0v1.300" fill="none" stroke="#cc2233" stroke-width="1.100"/><rect x="1.300" y="2.800" width="6.400" height="4.800" rx=".5" fill="#e38a94" stroke="#cc2233" stroke-width=".9"/></g>
</defs>
<!-- header icons -->
<path d="M15.200 164.600l-4.800-3.300v6.600zM20.500 164.600l-4.800-3.300v6.600z" fill="#333" transform="translate(30.800 0) scale(-1 1)"/>
<path d="M10.300 164.600l4.800-3.300v6.600zM15.600 164.600l4.800-3.300v6.600z" fill="#333"/>
<circle cx="288.500" cy="164.500" r="4.600" fill="#222"/><path d="M285.800 164.500h5.400" stroke="#fff" stroke-width="1.400"/>
<path d="M301.500 159.500v10.500" stroke="#666" stroke-width="1"/><path d="M303 161.500v6.500" stroke="#999" stroke-width=".8"/>
<!-- row 1 -->
<use href="#trix" x="27.500" y="192"/>
<use href="#eye" x="57" y="192.200"/>
<path d="M75 188.500l3-3h9.500v10.500l-3 3h-9.500z" fill="#f2f2f2" stroke="#333" stroke-width="1"/><path d="M75 188.500h9.500v10.500M84.500 188.500l3-3" fill="none" stroke="#333" stroke-width=".9"/><path d="M75.500 189h8.500v9.500h-8.500z" fill="#dfe3ea"/>
<circle cx="179.400" cy="192.300" r="6.200" fill="#fff" stroke="#333" stroke-width="1.200"/><circle cx="179.400" cy="192.300" r="2.600" fill="#222"/>
<!-- row 2 -->
<use href="#tri" x="45.500" y="216.300"/>
<g transform="translate(69.900 216.200)" fill="#9a9a9a"><circle r="5.600"/><g id="teeth"><rect x="-1.800" y="-8" width="3.600" height="16" rx=".5"/><rect x="-1.800" y="-8" width="3.600" height="16" rx=".5" transform="rotate(45)"/><rect x="-1.800" y="-8" width="3.600" height="16" rx=".5" transform="rotate(90)"/><rect x="-1.800" y="-8" width="3.600" height="16" rx=".5" transform="rotate(135)"/></g><circle r="2.500" fill="#efefef"/></g>
<!-- row 3 -->
<use href="#tri" x="45.500" y="240.300"/><use href="#fold" x="69.900" y="240.200"/>
<!-- row 4 -->
<use href="#tri" x="45.500" y="264.300"/><use href="#eyeoff" x="69.900" y="264.200"/><use href="#fold" x="94.900" y="264.200"/>
<!-- row 5 -->
<use href="#tri" x="45.500" y="288.300"/><use href="#eye" x="69.900" y="288.200"/><use href="#fold" x="94.900" y="288.200"/>
<!-- row 6 -->
<use href="#trix" x="45.500" y="312"/><use href="#eye" x="69.900" y="312.200"/><use href="#fold" x="94.900" y="312.200"/>
<!-- row 7 -->
<use href="#eyeoff" x="88" y="336.200"/><use href="#sk" x="113" y="336"/>
<!-- row 8 -->
<use href="#eye" x="88" y="360.200"/><use href="#sk" x="113" y="360"/>
<!-- row 9 -->
<use href="#trix" x="45.500" y="384"/><use href="#eye" x="69.900" y="384.200"/><use href="#fold" x="94.900" y="384.200"/>
<!-- row 10 -->
<use href="#eyeoff" x="88" y="408.200"/>
<rect x="109.500" y="400.800" width="11" height="11" fill="#fff" stroke="#333" stroke-width="1.100" stroke-dasharray="26 9" stroke-dashoffset="-3"/>
<rect x="105" y="404.500" width="11.500" height="11.500" fill="#e89a5e"/><rect x="109.500" y="404.500" width="7" height="7.500" fill="#f0b080" fill-opacity=".8"/>
</svg>
<!-- ===== SKETCH PALETTE ===== -->
<div class="abs" style="left:947px;top:272px;width:250px;height:423px;background:#f0f0f0;border:1px solid #c6c6c6"></div>
<div class="abs" style="left:948.500px;top:296px;width:247.500px;height:1px;background:#c6c6c6"></div>
<div class="abs" style="left:948.500px;top:658px;width:247.500px;height:1px;background:#c6c6c6"></div>
<div class="t" style="left:972px;top:279px;font-size:11px;color:#555">SKETCH PALETTE</div>
<div class="t" style="left:965.400px;top:306.800px;font-size:11px;font-weight:bold;color:#222">Options</div>
<style>.pl{position:absolute;left:960.200px;font-size:11px;color:#222;white-space:nowrap;line-height:1}
.cb{position:absolute;left:1115.200px;width:13.600px;height:13.400px;border:1.200px solid #4d4d4d;border-radius:3.500px;background:linear-gradient(#fdfdfd,#c9c9c9)}</style>
<div class="pl" style="top:336.700px">Linetype</div>
<div class="pl" style="top:366.700px">Look At</div>
<div class="pl" style="top:396.700px">Sketch Grid</div>
<div class="pl" style="top:426.700px">Snap</div>
<div class="pl" style="top:456.700px">Slice</div>
<div class="pl" style="top:486.700px">Show Profile</div>
<div class="pl" style="top:516.700px">Show Points</div>
<div class="pl" style="top:546.700px">Show Dimensions</div>
<div class="pl" style="top:576.700px">Show Constraints</div>
<div class="pl" style="top:606.700px">Show Projected Geometries</div>
<div class="pl" style="top:636.700px">3D Sketch</div>
<div class="cb" style="top:395px"></div><div class="cb" style="top:425px"></div><div class="cb" style="top:455px"></div>
<div class="cb" style="top:485px"></div><div class="cb" style="top:515px"></div><div class="cb" style="top:545px"></div>
<div class="cb" style="top:575px"></div><div class="cb" style="top:605px"></div><div class="cb" style="top:635px"></div>
<div class="abs" style="left:1105px;top:667px;width:80px;height:19px;border:1px solid #b4b4b4;background:#f0f0f0"></div>
<div class="t" style="left:1109.500px;top:670.500px;font-size:12px;color:#555">Finish Sketch</div>
<svg style="left:940px;top:270px" width="262" height="430" viewBox="940 270 262 430">
<path d="M950.500 279.500v10M952.500 281v7" stroke="#777" stroke-width="1"/>
<circle cx="963.600" cy="284.500" r="4.600" fill="#222"/><path d="M960.900 284.500h5.400" stroke="#fff" stroke-width="1.400"/>
<path d="M1181.700 281.200l4.800 3.300l-4.800 3.300zM1187 281.200l4.800 3.300l-4.800 3.300z" fill="#222"/>
<path d="M952.200 309.200h8.200l-4.100 5.400z" fill="#222"/>
<!-- checks -->
<g fill="none" stroke="#222" stroke-width="1.500">
<path d="M1118.500 402l2.800 3.300l4.700-8"/><path d="M1118.500 492l2.800 3.300l4.700-8"/><path d="M1118.500 522l2.800 3.300l4.700-8"/>
<path d="M1118.500 552l2.800 3.300l4.700-8"/><path d="M1118.500 582l2.800 3.300l4.700-8"/><path d="M1118.500 612l2.800 3.300l4.700-8"/>
</g>
<!-- linetype icons -->
<g fill="none" stroke-width="1">
<path d="M1117.100 340.700l8.600-3.900M1117.100 343.900l8.600 3.600" stroke="#666"/>
<path d="M1113.900 342.300h16.200" stroke="#e07a2a" stroke-dasharray="4 1.300 1.300 1.300"/>
<path d="M1125.500 334.300l1.300 1.600l1.300-1.600M1125.500 350l1.300-1.600l1.300 1.600" stroke="#e07a2a" stroke-width=".9"/>
<path d="M1146 335.500h9.500v3.500h2.500v6.500h-2.500v3.500h-9.500v-3.500h-1.500v-6.500h1.500z" stroke="#bcbcbc"/>
<path d="M1143.500 342.300h15.500" stroke="#f0b890" stroke-dasharray="4 1.300 1.300 1.300"/>
</g>
<!-- look at -->
<g>
<path d="M1116 369l5.300-4.300l1.100 2.600l4.300-1.500v3.200" fill="#8a8f9a" stroke="#333a48" stroke-width=".9"/>
<rect x="1114.300" y="369" width="15.700" height="10.600" rx="1" fill="#fafafa" stroke="#333a48" stroke-width="1.100"/>
<rect x="1117.500" y="372.300" width="9.300" height="4.300" fill="#b4bac8" stroke="#333a48" stroke-width="1"/>
</g>
</svg>
<!-- ===== UNSAVED BAR ===== -->
<div class="abs" style="left:469.200px;top:152px;width:264.600px;height:23.500px;background:#f0f0f0"></div>
<div class="abs" style="left:683px;top:153px;width:1.800px;height:22px;background:#d2d2d2"></div>
<div class="t" style="left:494.500px;top:158.800px;font-size:11px;font-weight:bold;color:#333">Unsaved:</div>
<div class="t" style="left:564.200px;top:158.800px;font-size:11px;color:#222">Changes may be lost</div>
<div class="t" style="left:697.600px;top:158.800px;font-size:11px;color:#0f6fc0">Save</div>
<svg style="left:470px;top:153px" width="22" height="22" viewBox="470 153 22 22">
<path d="M480.500 155.800l8.300 14.800h-16.600z" fill="#ffa11f" stroke="#ffa11f" stroke-width="1" stroke-linejoin="round"/>
<path d="M480.500 160v5.500" stroke="#fff" stroke-width="1.900" stroke-linecap="round"/><circle cx="480.500" cy="168.300" r="1.100" fill="#fff"/>
</svg>
<!-- ===== VIEW CUBE ===== -->
<svg style="left:1080px;top:160px" width="122" height="110" viewBox="1080 160 122 110">
<defs><radialGradient id="vcs" cx=".5" cy=".5" r=".5"><stop offset="0" stop-color="#000" stop-opacity=".22"/><stop offset="1" stop-color="#000" stop-opacity="0"/></radialGradient></defs>
<ellipse cx="1158" cy="238" rx="24" ry="16" fill="url(#vcs)"/>
<path d="M1103.300 196.500L1131.600 175L1170 187.100L1147.100 212z" fill="#ececec" fill-opacity=".8"/>
<path d="M1103.300 196.500L1147.100 212L1145.800 251.100L1106 234.300z" fill="#e8e8e8" fill-opacity=".8"/>
<path d="M1147.100 212L1170 187.100L1167.400 222.800L1145.800 251.100z" fill="#e0e0e0" fill-opacity=".8"/>
<g fill="none" stroke="#888" stroke-width=".9" stroke-dasharray="5 3">
<path d="M1103.300 196.500L1131.600 175L1170 187.100L1147.100 212z"/><path d="M1147.100 212L1145.800 251.100L1167.400 222.800L1170 187.100"/>
</g>
<path d="M1100.600 189.500L1106 234.500" stroke="#3c3cf0" stroke-width="2.200"/>
<path d="M1106 235L1152.500 255.800" stroke="#e88484" stroke-width="2.200"/>
<text x="1099.300" y="186.500" font-family="Liberation Sans, sans-serif" font-size="14" fill="#7d7dff" stroke="#7d7dff" stroke-width=".4" text-anchor="middle">Z</text>
<text x="1159.300" y="263.500" font-family="Liberation Sans, sans-serif" font-size="14" fill="#f07070" stroke="#f07070" stroke-width=".4" text-anchor="middle">X</text>
<text transform="matrix(.9 .33 -.05 1 1110 222)" font-family="Liberation Sans, sans-serif" font-size="10" font-weight="bold" fill="#a4a9b2" opacity=".98" letter-spacing="-.1">FRONT</text>
<text transform="matrix(.9 .28 -.7 .55 1127.500 190.500)" font-family="Liberation Sans, sans-serif" font-size="10" font-weight="bold" fill="#a4a9b2" opacity=".98">TOP</text>
<text transform="matrix(.5 -.62 -.04 1 1153.500 229.500)" font-family="Liberation Sans, sans-serif" font-size="9.500" font-weight="bold" fill="#a4a9b2" opacity=".98">RIGHT</text>
</svg>
<!-- ===== COMMENTS + NAV + TIMELINE ===== -->
<div class="abs" style="left:5px;top:959.800px;width:299.700px;height:24.500px;background:#f0f0f0;border:1px solid #c2c2c2"></div>
<div class="t" style="left:30.300px;top:966.700px;font-size:11px;color:#555">COMMENTS</div>
<div class="abs" style="left:498.200px;top:961.200px;width:237px;height:23.400px;background:#f0f0f0"></div>
<div class="abs" style="left:0;top:989px;width:1202px;height:51px;background:#f0f0f0;border-top:1.500px solid #d4d4d4"></div>
<svg style="left:0;top:955px" width="1202" height="85" viewBox="0 955 1202 85">
<circle cx="288.300" cy="972.400" r="4.700" fill="#222"/><path d="M285.600 972.400h5.400M288.300 969.700v5.400" stroke="#fff" stroke-width="1.400"/>
<path d="M301.500 967v10.500" stroke="#666" stroke-width="1"/><path d="M303 969v6.500" stroke="#999" stroke-width=".8"/>
<!-- playback -->
<g fill="#47474a">
<rect x="11.900" y="1006.800" width="2.300" height="14"/><path d="M24 1006.800v14l-9.500-7z"/>
<path d="M46.300 1007.300v13l-9.500-6.500z"/><rect x="47" y="1010.500" width="2.400" height="6.600"/>
<path d="M61.700 1005.700l12.500 8.300l-12.500 8.300z"/>
<path d="M88.800 1007.300v13l9.500-6.500z"/><rect x="85.700" y="1010.500" width="2.400" height="6.600"/>
<path d="M112.300 1006.800v14l9.500-7z"/><rect x="122.200" y="1006.800" width="2.300" height="14"/>
</g>
<!-- timeline -->
<rect x="144.800" y="996.900" width="92.500" height="5.600" fill="#6ff3da"/>
<path d="M155 1025v5h168.300v-5M179 1025v5M203 1025v5M227 1025v5M251 1025v5M275 1025v5M299 1025v5" fill="none" stroke="#c6c6c6" stroke-width="1.800"/>
<!-- tl icon 1 & 4 sketch -->
<g id="tls"><rect x="148.500" y="1005.500" width="12.500" height="12.500" fill="#fff" stroke="#333" stroke-width="1.100" stroke-dasharray="8 2.500" stroke-dashoffset="3"/>
<g fill="#1e8fe6"><rect x="147" y="1004" width="2.600" height="2.600"/><rect x="159.800" y="1004" width="2.600" height="2.600"/><rect x="147" y="1016.800" width="2.600" height="2.600"/></g>
<path d="M155.300 1020.300l.9-2.700l4.600-4.300l1.900 1.900l-4.600 4.300z" fill="#f5b042" stroke="#b87818" stroke-width=".4"/><path d="M155.300 1020.300l.5-1.500l1 1z" fill="#333"/><path d="M160.800 1013.300l1.100-1l1.900 1.900l-1.100 1z" fill="#ee4444"/></g>
<use href="#tls" x="72.200"/>
<!-- tl icon 2 extrude -->
<path d="M171.500 1009.500l3-3h10.500v10l-3 3h-10.500z" fill="#4e9be0" stroke="#2b6cb0" stroke-width=".8"/><path d="M171.500 1009.500h10.500v10" fill="none" stroke="#2b6cb0" stroke-width=".8"/><path d="M172 1010h9.600v9.300h-9.600z" fill="#6fb3ee"/>
<path d="M171.500 1021.300h11" stroke="#999" stroke-width="1.200"/><path d="M186.300 1019.500v-12M184.300 1009.500l2-3l2 3" fill="none" stroke="#333" stroke-width="1"/>
<!-- tl icon 3 -->
<path d="M199.300 1005.300l-3.800 2.600v12.300h3.800" fill="#e6e6e6" stroke="#555" stroke-width="1.100"/>
<path d="M200.200 1007.800l4.800-2.500v12.500l-4.800 2.500z" fill="#5fbb6a" stroke="#3f9a4a" stroke-width=".5"/>
<path d="M206.200 1007.800l5-2.500v12.500l-5 2.500z" fill="#e39960" stroke="#c47a40" stroke-width=".5"/>
<!-- faded icons -->
<g opacity=".45">
<path d="M243.500 1004.500h15l-3 9h-9z" fill="#a8c8e8" stroke="#8ab" stroke-width=".6"/><circle cx="251" cy="1015.500" r="4" fill="#f4f4f4" stroke="#aaa" stroke-width="1"/>
<path d="M267.500 1009.500l3-3h9.500v9.500l-3 3h-9.500z" fill="#9cc4ea" stroke="#7aa8d0" stroke-width=".6"/><path d="M267.500 1021h10" stroke="#aaa" stroke-width="1.200"/><path d="M282 1019v-12M280 1009.500l2-3l2 3" fill="none" stroke="#777" stroke-width="1"/>
<path d="M297.500 1005.500v14h-6z" fill="none" stroke="#999" stroke-width="1"/><path d="M299.500 1005.500v14h6z" fill="#a8c8e8" stroke="#8ab" stroke-width=".6"/>
<path d="M316 1009l3-3h11v11l-3 3h-11z" fill="#f4f4f4" stroke="#888" stroke-width="1"/><path d="M316 1009h11v11M327 1009l3-3" fill="none" stroke="#888" stroke-width="1"/><path d="M318.500 1012.500h3.500v3.500h3v2.500h-6.500z" fill="#9cc4ea"/>
</g>
<!-- marker -->
<path d="M232.500 998.800h12.500v3.500l-5.200 5.200h-2.100l-5.200-5.200z" fill="#555"/><rect x="238" y="1006" width="2" height="25" fill="#555"/>
<!-- settings gear -->
<g transform="translate(1180 1013.900) scale(1.06)" fill="#8c8c8c"><circle r="5.400"/><rect x="-1.700" y="-7.600" width="3.400" height="15.200" rx=".5"/><rect x="-1.700" y="-7.600" width="3.400" height="15.200" rx=".5" transform="rotate(45)"/><rect x="-1.700" y="-7.600" width="3.400" height="15.200" rx=".5" transform="rotate(90)"/><rect x="-1.700" y="-7.600" width="3.400" height="15.200" rx=".5" transform="rotate(135)"/><circle r="2.400" fill="#f0f0f0"/></g>
<!-- nav icons -->
<g fill="#333"><path d="M522.400 971h5.600l-2.800 3.600z"/><path d="M633.200 971h5.600l-2.800 3.600z"/><path d="M663 971h5.600l-2.800 3.600z"/><path d="M694 971h5.600l-2.800 3.600z"/><path d="M725.100 971h5.600l-2.800 3.600z"/></g>
<!-- orbit -->
<g>
<path d="M501.600 973.200a7.700 3.100 0 1 1 3.400 2.900" fill="none" stroke="#2a2a2a" stroke-width="1.400"/>
<path d="M500.800 976l4.700-2.600l.300 4.700z" fill="#2a2a2a"/>
<path d="M508.400 980.300v-11.400h-1.700l3-3.900l3 3.900h-1.700v11.400z" fill="#fff" stroke="#2a2a2a" stroke-width=".900" stroke-linejoin="round"/>
<path d="M513.500 975.600a7.700 3.100 0 0 0 2-3.800" fill="none" stroke="#2a2a2a" stroke-width="1.400"/>
</g>
<!-- look at -->
<path d="M536.300 970.200l5.300-4.600l1.200 2.700l4.300-1.800v3.700" fill="#b0b0b4" stroke="#3a4458" stroke-width=".900" stroke-linejoin="round"/>
<rect x="534.900" y="970.300" width="15" height="10" rx=".800" fill="#f8f8f8" stroke="#3a4458" stroke-width="1.200"/><rect x="537.500" y="973.300" width="9.600" height="4.200" fill="#aab0bc" stroke="#3a4458" stroke-width="1"/>
<!-- hand -->
<path d="M565.200 975.800l-3-2.700c-1-.9.300-2.300 1.400-1.500l2.400 1.900l-1.400-5.300c-.4-1.400 1.500-1.900 1.900-.6l1 3.400l-.3-4.600c-.1-1.400 1.900-1.500 2-.1l.4 4.500l.6-4c.2-1.300 2.100-1 1.900.3l-.5 4.500l1.300-2.700c.6-1.200 2.300-.4 1.800.8l-1.400 3.600c-.4 2.400-.8 4-1.600 5.300c-.8 1.200-2 1.700-3.600 1.700c-1.700 0-2.700-.9-3.600-2.100z" fill="#f4f8fc" stroke="#2a2a2a" stroke-width=".900" stroke-linejoin="round"/>
<!-- zoom -->
<circle cx="591.800" cy="971.500" r="4.800" fill="#eef4fa" stroke="#333" stroke-width="1.300"/><path d="M595.300 975.200l4 4.200" stroke="#333" stroke-width="2.400" stroke-linecap="round"/>
<path d="M598 967.500h4.500M600.200 965.300v4.400M598 972h4.500" stroke="#333" stroke-width="1"/>
<!-- zoom window -->
<circle cx="618.800" cy="971" r="6" fill="#eef4fa" stroke="#333" stroke-width="1.300"/><rect x="615.800" y="968.300" width="6" height="5.400" fill="none" stroke="#333" stroke-width="1"/><path d="M623.300 975.700l4 4.200" stroke="#333" stroke-width="2.400" stroke-linecap="round"/>
<!-- display -->
<rect x="645.700" y="965.700" width="14.500" height="12" rx="1.200" fill="#fdfdfd" stroke="#3a3a3a" stroke-width="1.100"/>
<rect x="647.600" y="967.600" width="10.700" height="8.200" rx="1" fill="#a6c2e6" stroke="#2a4888" stroke-width="1"/>
<path d="M651 978v1.200h-1.500v1.400h7v-1.400h-1.500v-1.200" fill="#fdfdfd" stroke="#3a3a3a" stroke-width=".900"/>
<!-- grid -->
<rect x="676.600" y="965.600" width="14.800" height="14.800" rx="1.200" fill="#77777c" stroke="#3a3a3a" stroke-width="1"/>
<rect x="677.35" y="966.35" width="2.150" height="2.150" fill="#ffffff"/><rect x="677.35" y="969.20" width="2.150" height="2.150" fill="#fafafa"/><rect x="677.35" y="972.05" width="2.150" height="2.150" fill="#e4e6ea"/><rect x="677.35" y="974.90" width="2.150" height="2.150" fill="#c2c6d0"/><rect x="677.35" y="977.75" width="2.150" height="2.150" fill="#a8aebc"/><rect x="680.20" y="966.35" width="2.150" height="2.150" fill="#ffffff"/><rect x="680.20" y="969.20" width="2.150" height="2.150" fill="#fafafa"/><rect x="680.20" y="972.05" width="2.150" height="2.150" fill="#e4e6ea"/><rect x="680.20" y="974.90" width="2.150" height="2.150" fill="#c2c6d0"/><rect x="680.20" y="977.75" width="2.150" height="2.150" fill="#a8aebc"/><rect x="683.05" y="966.35" width="2.150" height="2.150" fill="#ffffff"/><rect x="683.05" y="969.20" width="2.150" height="2.150" fill="#fafafa"/><rect x="683.05" y="972.05" width="2.150" height="2.150" fill="#e4e6ea"/><rect x="683.05" y="974.90" width="2.150" height="2.150" fill="#c2c6d0"/><rect x="683.05" y="977.75" width="2.150" height="2.150" fill="#a8aebc"/><rect x="685.90" y="966.35" width="2.150" height="2.150" fill="#ffffff"/><rect x="685.90" y="969.20" width="2.150" height="2.150" fill="#fafafa"/><rect x="685.90" y="972.05" width="2.150" height="2.150" fill="#e4e6ea"/><rect x="685.90" y="974.90" width="2.150" height="2.150" fill="#c2c6d0"/><rect x="685.90" y="977.75" width="2.150" height="2.150" fill="#a8aebc"/><rect x="688.75" y="966.35" width="2.150" height="2.150" fill="#ffffff"/><rect x="688.75" y="969.20" width="2.150" height="2.150" fill="#fafafa"/><rect x="688.75" y="972.05" width="2.150" height="2.150" fill="#e4e6ea"/><rect x="688.75" y="974.90" width="2.150" height="2.150" fill="#c2c6d0"/><rect x="688.75" y="977.75" width="2.150" height="2.150" fill="#a8aebc"/>
<!-- viewports -->
<g fill="#aec6e8" stroke="#20407e" stroke-width="1.100"><rect x="707.600" y="966.500" width="6.600" height="5.600" rx="1"/><rect x="714.800" y="966.500" width="6.600" height="5.600" rx="1"/><rect x="707.600" y="972.800" width="6.600" height="5.600" rx="1"/><rect x="714.800" y="972.800" width="6.600" height="5.600" rx="1"/></g>
<g fill="#c8daf2" stroke="#7a98c8" stroke-width=".500"><rect x="709.400" y="968.200" width="3" height="2.200"/><rect x="716.600" y="968.200" width="3" height="2.200"/><rect x="709.400" y="974.500" width="3" height="2.200"/><rect x="716.600" y="974.500" width="3" height="2.200"/></g>
</svg>
<!-- window frame -->
<div class="abs" style="left:0;top:0;width:1.200px;height:1040px;background:#6a6a6a"></div>
<div class="abs" style="left:1199px;top:31px;width:1.500px;height:117px;background:#fbfbfb"></div>
<div class="abs" style="left:1200.500px;top:0;width:1.500px;height:1040px;background:#6a6a6a"></div>
<div class="abs" style="left:0;top:1038.700px;width:1202px;height:1.300px;background:#6a6a6a"></div>
<div class="abs" style="left:0;top:0;width:1202px;height:1px;background:#dcdcdc"></div>
<div class="abs" style="left:0;top:0;width:458px;height:1px;background:#555"></div>
<div class="abs" style="left:698px;top:0;width:504px;height:1px;background:#5a5a5a"></div>
<div class="abs" style="left:554px;top:0;width:48px;height:1px;background:#1a7fdc"></div>
</body></html>
